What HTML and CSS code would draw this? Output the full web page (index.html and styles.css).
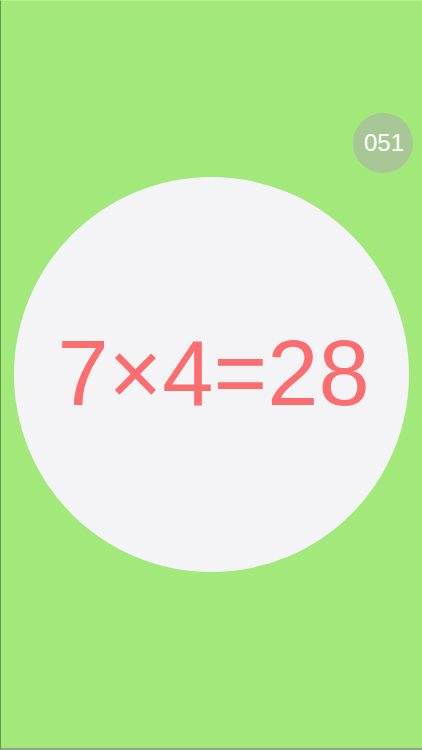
FILE: index.html
```html
<!DOCTYPE html>
<html>
<head>
<meta charset="utf-8">
<link rel="stylesheet" href="styles.css">
</head>
<body>
<div class="screen">
  <div class="badge">051</div>
  <div class="card">
    <span class="equation">7×4=28</span>
  </div>
</div>
</body>
</html>
```

FILE: styles.css
```css
html, body {
  margin: 0;
  padding: 0;
}
body {
  font-family: "Liberation Sans", Arial, sans-serif;
}
.screen {
  position: relative;
  box-sizing: border-box;
  width: 422px;
  height: 750px;
  background: #a3e87a;
  border-left: 1px solid #5f9c45;
  border-top: 1px solid #b4f290;
  border-bottom: 2px solid #8fa38a;
  padding: 176px 0 0 13px;
  display: flex;
  flex-direction: column;
  align-items: flex-start;
}
.badge {
  position: absolute;
  top: 112px;
  left: 352px;
  width: 60px;
  height: 60px;
  border-radius: 50%;
  background: #a9c796;
  color: #ffffff;
  font-size: 24px;
  display: flex;
  align-items: center;
  justify-content: center;
  padding-left: 2px;
  box-sizing: border-box;
}
.card {
  width: 395px;
  height: 395px;
  border-radius: 50%;
  background: #f4f4f6;
  display: flex;
  align-items: center;
  justify-content: center;
}
.equation {
  color: #fc6d70;
  font-size: 92px;
  line-height: 1;
  margin-top: -4px;
  margin-left: 4px;
}
```
